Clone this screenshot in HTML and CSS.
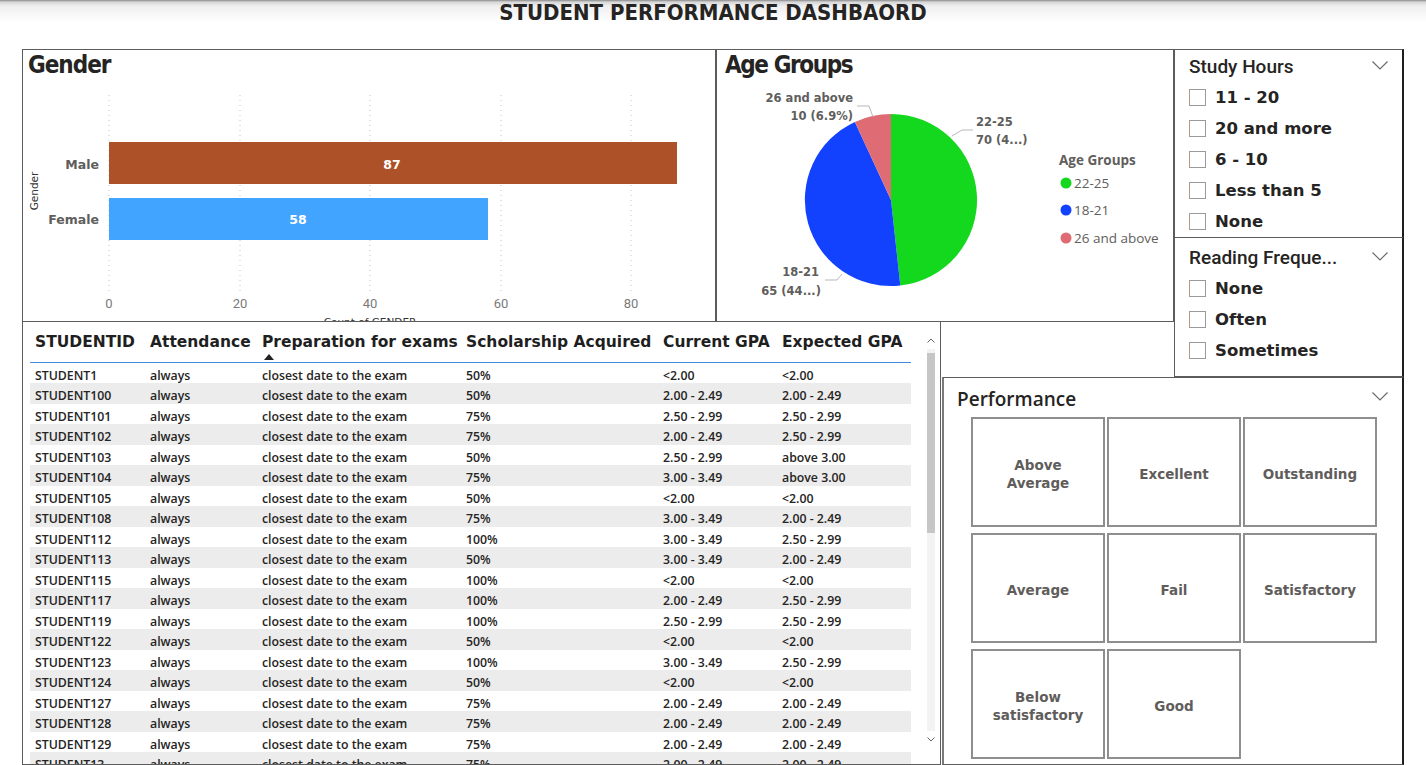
FILE: index.html
```html
<!DOCTYPE html>
<html lang="en">
<head>
<meta charset="utf-8">
<title>Student Performance Dashboard</title>
<link rel="stylesheet" href="styles.css">
</head>
<body>
<header class="top">
  <h1 class="title">STUDENT PERFORMANCE DASHBAORD</h1>
</header>
<main class="board">
  <section class="panel gender">
    <h2 class="vtitle">Gender</h2>
    <svg class="chart" width="692" height="241" viewBox="0 0 692 241">
      <g class="grid">
        <line x1="86" y1="15" x2="86" y2="212"/>
        <line x1="217" y1="15" x2="217" y2="212"/>
        <line x1="347" y1="15" x2="347" y2="212"/>
        <line x1="478" y1="15" x2="478" y2="212"/>
        <line x1="608" y1="15" x2="608" y2="212"/>
      </g>
      <rect x="86" y="62" width="568" height="42" fill="#AD5128"/>
      <rect x="86" y="118" width="379" height="42" fill="#41A4FF"/>
      <text class="barval" x="369" y="89">87</text>
      <text class="barval" x="275" y="144">58</text>
      <text class="cat" x="76" y="89">Male</text>
      <text class="cat" x="76" y="144">Female</text>
      <text class="axtitle" transform="translate(15 111) rotate(-90)">Gender</text>
      <g class="tick">
        <text x="86" y="228">0</text>
        <text x="217" y="228">20</text>
        <text x="347" y="228">40</text>
        <text x="478" y="228">60</text>
        <text x="608" y="228">80</text>
      </g>
      <text class="axtitle" x="347" y="246">Count of GENDER</text>
    </svg>
  </section>

  <section class="panel age">
    <h2 class="vtitle">Age Groups</h2>
    <svg class="chart" width="456" height="241" viewBox="0 0 456 241">
      <path d="M174 120 L174 34 A86 86 0 0 1 183.3 205.5 Z" fill="#13D81E"/>
      <path d="M174 120 L183.3 205.5 A86 86 0 0 1 137.9 41.9 Z" fill="#1342FF"/>
      <path d="M174 120 L137.9 41.9 A86 86 0 0 1 174 34 Z" fill="#DF6B74"/>
      <g class="leader">
        <polyline points="140,26 152,26 156,37"/>
        <polyline points="235,56 245,50 256,50"/>
        <polyline points="108,200 120,200 125,194"/>
      </g>
      <g class="plabel">
        <text x="136" y="22" text-anchor="end">26 and above</text>
        <text x="136" y="40" text-anchor="end">10 (6.9%)</text>
        <text x="259" y="46">22-25</text>
        <text x="259" y="64">70 (4...)</text>
        <text x="102" y="196" text-anchor="end">18-21</text>
        <text x="104" y="215" text-anchor="end">65 (44...)</text>
      </g>
      <text class="lgtitle" x="342" y="85">Age Groups</text>
      <circle cx="349" cy="103" r="5.5" fill="#13D81E"/>
      <circle cx="349" cy="130" r="5.5" fill="#1342FF"/>
      <circle cx="349" cy="158" r="5.5" fill="#DF6B74"/>
      <g class="lgitem">
        <text x="357" y="108">22-25</text>
        <text x="357" y="135">18-21</text>
        <text x="357" y="163">26 and above</text>
      </g>
    </svg>
  </section>

  <section class="panel slicer study">
    <div class="shead">
      <h3 class="stitle">Study Hours</h3>
      <svg class="chev" width="16" height="9" viewBox="0 0 16 9"><polyline points="0.5,0.5 8,8 15.5,0.5"/></svg>
    </div>
    <ul class="opts">
      <li><span class="box"></span>11 - 20</li>
      <li><span class="box"></span>20 and more</li>
      <li><span class="box"></span>6 - 10</li>
      <li><span class="box"></span>Less than 5</li>
      <li><span class="box"></span>None</li>
    </ul>
  </section>

  <section class="panel slicer reading">
    <div class="shead">
      <h3 class="stitle">Reading Freque...</h3>
      <svg class="chev" width="16" height="9" viewBox="0 0 16 9"><polyline points="0.5,0.5 8,8 15.5,0.5"/></svg>
    </div>
    <ul class="opts">
      <li><span class="box"></span>None</li>
      <li><span class="box"></span>Often</li>
      <li><span class="box"></span>Sometimes</li>
    </ul>
  </section>

  <section class="panel tablep">
    <table class="grid-table">
      <colgroup>
        <col class="c1"><col class="c2"><col class="c3"><col class="c4"><col class="c5"><col class="c6">
      </colgroup>
      <thead>
        <tr>
          <th>STUDENTID</th>
          <th>Attendance</th>
          <th>Preparation for exams<span class="sort"></span></th>
          <th>Scholarship Acquired</th>
          <th>Current GPA</th>
          <th>Expected GPA</th>
        </tr>
      </thead>
      <tbody>
        <tr><td>STUDENT1</td><td>always</td><td>closest date to the exam</td><td>50%</td><td>&lt;2.00</td><td>&lt;2.00</td></tr>
        <tr><td>STUDENT100</td><td>always</td><td>closest date to the exam</td><td>50%</td><td>2.00 - 2.49</td><td>2.00 - 2.49</td></tr>
        <tr><td>STUDENT101</td><td>always</td><td>closest date to the exam</td><td>75%</td><td>2.50 - 2.99</td><td>2.50 - 2.99</td></tr>
        <tr><td>STUDENT102</td><td>always</td><td>closest date to the exam</td><td>75%</td><td>2.00 - 2.49</td><td>2.50 - 2.99</td></tr>
        <tr><td>STUDENT103</td><td>always</td><td>closest date to the exam</td><td>50%</td><td>2.50 - 2.99</td><td>above 3.00</td></tr>
        <tr><td>STUDENT104</td><td>always</td><td>closest date to the exam</td><td>75%</td><td>3.00 - 3.49</td><td>above 3.00</td></tr>
        <tr><td>STUDENT105</td><td>always</td><td>closest date to the exam</td><td>50%</td><td>&lt;2.00</td><td>&lt;2.00</td></tr>
        <tr><td>STUDENT108</td><td>always</td><td>closest date to the exam</td><td>75%</td><td>3.00 - 3.49</td><td>2.00 - 2.49</td></tr>
        <tr><td>STUDENT112</td><td>always</td><td>closest date to the exam</td><td>100%</td><td>3.00 - 3.49</td><td>2.50 - 2.99</td></tr>
        <tr><td>STUDENT113</td><td>always</td><td>closest date to the exam</td><td>50%</td><td>3.00 - 3.49</td><td>2.00 - 2.49</td></tr>
        <tr><td>STUDENT115</td><td>always</td><td>closest date to the exam</td><td>100%</td><td>&lt;2.00</td><td>&lt;2.00</td></tr>
        <tr><td>STUDENT117</td><td>always</td><td>closest date to the exam</td><td>100%</td><td>2.00 - 2.49</td><td>2.50 - 2.99</td></tr>
        <tr><td>STUDENT119</td><td>always</td><td>closest date to the exam</td><td>100%</td><td>2.50 - 2.99</td><td>2.50 - 2.99</td></tr>
        <tr><td>STUDENT122</td><td>always</td><td>closest date to the exam</td><td>50%</td><td>&lt;2.00</td><td>&lt;2.00</td></tr>
        <tr><td>STUDENT123</td><td>always</td><td>closest date to the exam</td><td>100%</td><td>3.00 - 3.49</td><td>2.50 - 2.99</td></tr>
        <tr><td>STUDENT124</td><td>always</td><td>closest date to the exam</td><td>50%</td><td>&lt;2.00</td><td>&lt;2.00</td></tr>
        <tr><td>STUDENT127</td><td>always</td><td>closest date to the exam</td><td>75%</td><td>2.00 - 2.49</td><td>2.00 - 2.49</td></tr>
        <tr><td>STUDENT128</td><td>always</td><td>closest date to the exam</td><td>75%</td><td>2.00 - 2.49</td><td>2.00 - 2.49</td></tr>
        <tr><td>STUDENT129</td><td>always</td><td>closest date to the exam</td><td>75%</td><td>2.00 - 2.49</td><td>2.00 - 2.49</td></tr>
        <tr><td>STUDENT13</td><td>always</td><td>closest date to the exam</td><td>75%</td><td>2.00 - 2.49</td><td>2.00 - 2.49</td></tr>
      </tbody>
    </table>
    <div class="scroll">
      <svg class="sarrow" width="8" height="5" viewBox="0 0 8 5"><polyline points="0.5,4.5 4,1 7.5,4.5"/></svg>
      <div class="track"><div class="thumb"></div></div>
      <svg class="sarrow" width="8" height="5" viewBox="0 0 8 5"><polyline points="0.5,0.5 4,4 7.5,0.5"/></svg>
    </div>
  </section>

  <section class="panel perf">
    <div class="phead">
      <h3 class="ptitle">Performance</h3>
      <svg class="chev" width="16" height="9" viewBox="0 0 16 9"><polyline points="0.5,0.5 8,8 15.5,0.5"/></svg>
    </div>
    <div class="tiles">
      <div class="tile">Above<br>Average</div>
      <div class="tile">Excellent</div>
      <div class="tile">Outstanding</div>
      <div class="tile">Average</div>
      <div class="tile">Fail</div>
      <div class="tile">Satisfactory</div>
      <div class="tile">Below<br>satisfactory</div>
      <div class="tile">Good</div>
    </div>
  </section>
</main>
</body>
</html>
```
FILE: styles.css
```css
* { box-sizing: border-box; }

body {
  margin: 0;
  width: 1426px;
  height: 765px;
  overflow: hidden;
  background: #ffffff;
  font-family: "Open Sans", "Noto Sans", sans-serif;
  color: #252423;
}

.top {
  height: 49px;
  display: flex;
  justify-content: center;
  background: linear-gradient(to bottom, #8a8a8a 0px, #d6d6d6 2px, #efefef 6px, #ffffff 22px);
}

.title {
  margin: 0;
  font-family: "DejaVu Sans Condensed", "DejaVu Sans", sans-serif;
  font-stretch: condensed;
  font-weight: bold;
  font-size: 22px;
  line-height: 26px;
  color: #252423;
}

.board {
  display: grid;
  grid-template-columns: 694px 225px 1px 232px 230px;
  grid-template-rows: 189px 84px 55px 388px;
  padding-left: 22px;
}

.panel {
  border: 1px solid #5c5c5c;
  background: #fff;
  overflow: hidden;
  min-width: 0;
}

.gender { grid-column: 1; grid-row: 1 / 3; }
.age { grid-column: 2 / 5; grid-row: 1 / 3; }
.study { grid-column: 5; grid-row: 1; border-right: 2px solid #1e1e1e; }
.reading { grid-column: 5; grid-row: 2 / 4; border-right: 2px solid #1e1e1e; border-top: 0; }
.tablep { grid-column: 1 / 3; grid-row: 3 / 5; position: relative; border-top: 0; }
.perf { grid-column: 4 / 6; grid-row: 4; border-left: 2px solid #7a7a7a; border-right: 2px solid #1e1e1e; }

.vtitle {
  margin: 0;
  height: 30px;
  line-height: 30px;
  padding-left: 5px;
  font-family: "DejaVu Sans Condensed", "DejaVu Sans", sans-serif;
  font-stretch: condensed;
  font-weight: bold;
  font-size: 24px;
  letter-spacing: -1px;
  color: #252423;
}
.age .vtitle { padding-left: 8px; letter-spacing: -1.4px; }

.chart { display: block; }

.grid line { stroke: #c4c4c4; stroke-width: 1; stroke-dasharray: 1 4; }
.barval {
  font-family: "DejaVu Sans", sans-serif;
  font-weight: bold;
  font-size: 12.5px;
  fill: #ffffff;
  text-anchor: middle;
}
.cat {
  font-family: "DejaVu Sans", sans-serif;
  font-weight: bold;
  font-size: 12.5px;
  fill: #605E5C;
  text-anchor: end;
}
.axtitle {
  font-family: "DejaVu Sans", sans-serif;
  font-size: 10.5px;
  fill: #333;
  text-anchor: middle;
}
.tick text {
  font-family: Roboto, sans-serif;
  font-size: 13px;
  fill: #7a7a7a;
  text-anchor: middle;
}

.leader polyline { fill: none; stroke: #b8b8b8; stroke-width: 1; }
.plabel text {
  font-family: "DejaVu Sans", sans-serif;
  font-weight: bold;
  font-size: 11.5px;
  fill: #605E5C;
}
.lgtitle {
  font-family: "Open Sans", sans-serif;
  font-weight: 700;
  font-size: 13.5px;
  fill: #605E5C;
}
.lgitem text {
  font-family: "Open Sans", sans-serif;
  font-size: 13.5px;
  fill: #605E5C;
}

/* slicers */
.shead, .phead {
  display: flex;
  justify-content: space-between;
  align-items: flex-start;
}
.study .shead { padding: 1px 14px 0 14px; }
.reading .shead { padding: 4px 14px 0 14px; }
.stitle {
  margin: 0;
  font-family: Roboto, "Open Sans", sans-serif;
  font-weight: 500;
  font-size: 19px;
  line-height: 31px;
  color: #252423;
  white-space: nowrap;
}
.chev { margin-top: 10px; }
.chev polyline { fill: none; stroke: #6b6b6b; stroke-width: 1.2; }

.opts {
  list-style: none;
  margin: 0;
  padding: 0 0 0 14px;
}
.opts li {
  display: flex;
  align-items: center;
  gap: 9px;
  height: 31px;
  padding-bottom: 1px;
  font-family: "DejaVu Sans", sans-serif;
  font-weight: bold;
  font-size: 16.5px;
  color: #252423;
}
.box {
  width: 17px;
  height: 17px;
  border: 1px solid #9a9a9a;
  border-left-color: #b39a88;
  background: #fff;
  flex: none;
}

/* table */
.grid-table {
  margin: 10px 0 0 7px;
  width: 881px;
  border-collapse: collapse;
  table-layout: fixed;
}
.c1 { width: 115px; }
.c2 { width: 112px; }
.c3 { width: 204px; }
.c4 { width: 197px; }
.c5 { width: 119px; }
.c6 { width: 134px; }
.grid-table th {
  height: 30px;
  padding: 1px 0 0 5px;
  vertical-align: top;
  text-align: left;
  font-family: "DejaVu Sans", sans-serif;
  font-weight: bold;
  font-size: 15.5px;
  line-height: 18px;
  color: #1f1f1f;
  white-space: nowrap;
  border-bottom: 1px solid #3f8fde;
}
.sort {
  display: block;
  width: 0;
  height: 0;
  margin: 3px 0 0 2px;
  border-left: 5px solid transparent;
  border-right: 5px solid transparent;
  border-bottom: 6px solid #222;
}
.grid-table td {
  height: 20.5px;
  padding: 5px 0 0 5px;
  vertical-align: top;
  font-family: "Open Sans", sans-serif;
  font-weight: 600;
  font-size: 12.3px;
  line-height: 15.5px;
  color: #252423;
  white-space: nowrap;
  overflow: hidden;
}
.grid-table tbody tr:nth-child(even) td { background: #ececec; }

.scroll {
  position: absolute;
  left: 903px;
  top: 10px;
  width: 10px;
  height: 418px;
  display: flex;
  flex-direction: column;
  align-items: center;
  gap: 6px;
}
.sarrow { flex: none; margin-top: 6px; }
.sarrow:last-child { margin: 0 0 8px 0; }
.sarrow polyline { fill: none; stroke: #606060; stroke-width: 1; }
.track {
  flex: 1;
  width: 8px;
  background: #f3f3f3;
  padding-top: 4px;
}
.thumb {
  width: 8px;
  height: 180px;
  background: #c6c6c6;
}

/* performance */
.phead { padding: 8px 14px 0 13px; }
.ptitle {
  margin: 0;
  font-family: "Open Sans", sans-serif;
  font-weight: 600;
  font-size: 19px;
  line-height: 26px;
  color: #252423;
}
.phead .chev { margin-top: 6px; }
.tiles {
  display: grid;
  grid-template-columns: repeat(3, 134px);
  grid-auto-rows: 110px;
  column-gap: 2px;
  row-gap: 6px;
  margin: 5px 0 0 27px;
}
.tile {
  border: 2px solid #8e8e8e;
  padding-top: 3px;
  display: flex;
  align-items: center;
  justify-content: center;
  text-align: center;
  font-family: "DejaVu Sans", sans-serif;
  font-weight: bold;
  font-size: 13.5px;
  line-height: 18px;
  color: #5f5d5b;
}
```
